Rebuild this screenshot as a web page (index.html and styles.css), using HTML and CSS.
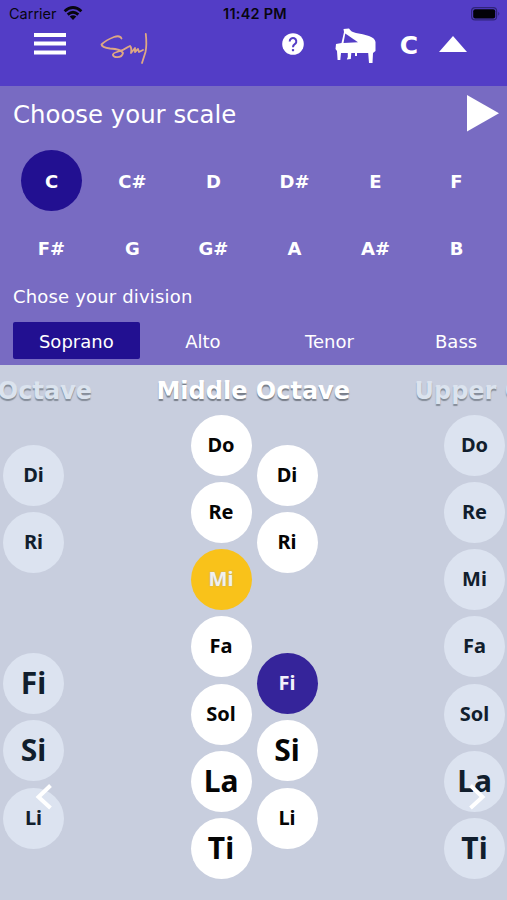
FILE: index.html
```
<!DOCTYPE html>
<html lang="en">
<head>
<meta charset="utf-8">
<title>Solfege Scales</title>
<link rel="stylesheet" href="styles.css">
</head>
<body>
<header class="header">
  <div class="status">
    <div class="carrier">
      <span>Carrier</span>
      <svg width="20" height="15" viewBox="0 0 20 15" fill="none" stroke="#08060f" stroke-width="2.8"><path d="M1.6 5.2Q10-2.2 18.4 5.2"/><path d="M4.7 8.6Q10 3.9 15.3 8.6"/><path d="M10 14L6.7 10.5Q10 8 13.3 10.5Z" fill="#08060f" stroke="none"/></svg>
    </div>
    <span class="clock">11:42 PM</span>
    <svg class="battery" width="30" height="14" viewBox="0 0 30 14"><rect x=".6" y=".6" width="25" height="12.3" rx="3.5" fill="none" stroke="#30247a" stroke-width="1.2"/><rect x="2.2" y="2.2" width="22" height="9.2" rx="2" fill="#030208"/><path d="M27.3 4.7q2 2 0 4z" fill="#30247a"/></svg>
  </div>
  <nav class="toolbar">
    <svg class="menu" width="32" height="22" viewBox="0 0 32 22" fill="#fff"><path d="M0 0h32v4H0zM0 8.6h32v4H0zM0 17.4h32v4H0z"/></svg>
    <svg class="signature" width="50" height="33" viewBox="0 0 50 33" fill="none" stroke="#dea884" stroke-width="1.8" stroke-linecap="round" stroke-linejoin="round"><path d="M21.5 6.5Q20 3 14 5Q6 8 1.5 12.5Q2 15.5 10 16.5Q21 17 23 21Q22 26 15 25Q10 22 17 20Q24 18 28 15L30 14Q32 16 31 21L35 16L35 20L38 17L39 20L43 18"/><path d="M45.8 2Q47 13 45.5 20L42 31"/></svg>
    <svg class="help" width="22" height="22" viewBox="0 0 22 22"><circle cx="11" cy="11" r="10.8" fill="#fff"/><path d="M7.7 8.4a3.3 3.3 0 1 1 5.6 2.3Q11 12.2 11 14.3" fill="none" stroke="#533dc6" stroke-width="2"/><path d="M9.9 16.1H12.1V18.2H9.9z" fill="#533dc6"/></svg>
    <svg class="piano" width="41" height="36" viewBox="0 0 41 36" fill="#fff"><path d="M8.5 1L14 .5Q16 4 21 5Q28 6 34 8Q40 10 40.5 14V23L38 25L37.5 35H34L33.2 25H22V28H20V25H16.3L15.8 31L11.8 31.5L12.8 29V25H6L5.3 32H2.6L2 23L.5 21L1 16L6.5 15L9 4Z"/><path d="M10.3 5.5L23 14.2L8.5 15Z" fill="#533dc6"/></svg>
    <span class="key">C</span>
    <svg class="collapse" width="28" height="16" viewBox="0 0 28 16" fill="#fff"><path d="M14 0L28 16H0z"/></svg>
  </nav>
</header>
<section class="panel">
  <div class="panel-title"><h1>Choose your scale</h1><svg width="32" height="37" viewBox="0 0 32 37" fill="#fff"><path d="M0 0L32 18.3L0 36.5z"/></svg></div>
  <div class="scales">
    <span class="scale active">C</span><span class="scale">C#</span><span class="scale">D</span><span class="scale">D#</span><span class="scale">E</span><span class="scale">F</span>
    <span class="scale">F#</span><span class="scale">G</span><span class="scale">G#</span><span class="scale">A</span><span class="scale">A#</span><span class="scale">B</span>
  </div>
  <h2>Chose your division</h2>
  <div class="divisions"><span class="division active">Soprano</span><span class="division">Alto</span><span class="division">Tenor</span><span class="division">Bass</span></div>
</section>
<main class="carousel">
  <div class="slides">
    <section class="slide faded">
      <h3>Lower Octave</h3>
      <div class="notes">
        <div class="column"></div>
        <div class="column sharps"><span class="note">Di</span><span class="note">Ri</span><span class="note large after-gap">Fi</span><span class="note large">Si</span><span class="note">Li</span></div>
      </div>
    </section>
    <section class="slide">
      <h3>Middle Octave</h3>
      <div class="notes">
        <div class="column"><span class="note">Do</span><span class="note">Re</span><span class="note yellow">Mi</span><span class="note">Fa</span><span class="note">Sol</span><span class="note large">La</span><span class="note large">Ti</span></div>
        <div class="column sharps"><span class="note">Di</span><span class="note">Ri</span><span class="note indigo after-gap">Fi</span><span class="note large">Si</span><span class="note">Li</span></div>
      </div>
    </section>
    <section class="slide faded">
      <h3>Upper Octave</h3>
      <div class="notes">
        <div class="column"><span class="note">Do</span><span class="note">Re</span><span class="note">Mi</span><span class="note">Fa</span><span class="note">Sol</span><span class="note large">La</span><span class="note large">Ti</span></div>
      </div>
    </section>
  </div>
  <svg class="arrow previous" width="18" height="28" viewBox="0 0 18 28"><path d="M15.5 2.5L3.5 14L15.5 25"/></svg>
  <svg class="arrow next" width="18" height="28" viewBox="0 0 18 28"><path d="M2.5 2.5L14.5 14L2.5 25"/></svg>
</main>
</body>
</html>
```
FILE: styles.css
```
* { box-sizing: border-box; }
body {
  margin: 0;
  width: 507px;
  height: 900px;
  overflow: hidden;
  background: #c8cede;
  color: #fff;
  font-family: "DejaVu Sans", Verdana, sans-serif;
}
svg { display: block; flex: none; }
h1, h2, h3 { margin: 0; font-weight: 400; }

.header { height: 86px; background: #533dc6; }
.status {
  display: grid;
  grid-template-columns: 1fr auto 1fr;
  height: 28px;
  padding: 0 6px 0 9px;
  align-items: center;
  color: #08060f;
  font: 14.5px/28px Inter, sans-serif;
}
.carrier { display: flex; align-items: center; gap: 6px; }
.carrier svg { margin-top: -2px; }
.clock { font-weight: 600; letter-spacing: .25px; }
.battery { justify-self: end; margin-top: -1px; }
.toolbar { display: flex; height: 32px; align-items: center; padding-left: 34px; }
.signature { margin: 9px 0 0 34px; }
.help { margin-left: 132px; }
.piano { margin: 3px 0 0 31px; }
.key { width: 22px; margin: 3px 0 0 22px; font-size: 25px; font-weight: 700; line-height: 32px; text-align: center; }
.collapse { margin-left: 19px; }

.panel { height: 279px; background: #786bc2; }
.panel-title { display: flex; height: 61px; justify-content: space-between; padding: 9px 8px 0 13px; }
h1 { font-size: 24.4px; line-height: 40px; }
.scales { display: grid; grid-template-columns: repeat(6, 81px); row-gap: 6px; padding: 3px 0 0 11px; justify-items: center; }
.scale {
  display: flex;
  width: 61px;
  height: 61px;
  padding-top: 2px;
  align-items: center;
  justify-content: center;
  border-radius: 50%;
  font-size: 18px;
  font-weight: 700;
}
.active { background: #221091; }
h2 { padding: 6px 0 0 13px; font-size: 18px; line-height: 25px; letter-spacing: .17px; }
.divisions { display: grid; grid-template-columns: repeat(4, 126.6px); margin: 13px 0 0 13px; }
.division { height: 37px; border-radius: 2px; text-align: center; font-size: 18px; line-height: 40px; }

.carousel { position: relative; height: 535px; overflow: hidden; }
.slides { display: flex; margin-left: -127px; }
.slide { flex: none; width: 253.5px; }
h3 {
  height: 49.5px;
  font-size: 24px;
  font-weight: 700;
  line-height: 53px;
  text-align: center;
  white-space: nowrap;
  text-shadow: 0 2px 1px #777d88;
}
.notes { display: grid; grid-template-columns: 61px 61px; gap: 5px; padding-left: 64px; }
.column { display: flex; flex-direction: column; gap: 6.25px; }
.sharps { margin-top: 30.5px; }
.note {
  display: flex;
  width: 61px;
  height: 61px;
  align-items: center;
  justify-content: center;
  border-radius: 50%;
  background: #fff;
  color: #050505;
  font: 700 20px/56px "Noto Sans", sans-serif;
  padding-bottom: 1px;
}
.large { font-size: 30px; }
.after-gap { margin-top: 73.5px; }
.yellow { background: #f9c21a; color: #f1f0ef; text-shadow: 0 0 2px #aaa78f; }
.indigo { background: #35249a; color: #f3f1fb; }
.faded h3 { color: #dbe3ee; text-shadow: 0 2px 1px #858d99; }
.faded .note { background: #dce3f0; color: #111e2d; }
.arrow { position: absolute; top: 418px; fill: none; stroke: #fff; stroke-width: 4; }
.previous { left: 35px; }
.next { right: 21px; }
```
